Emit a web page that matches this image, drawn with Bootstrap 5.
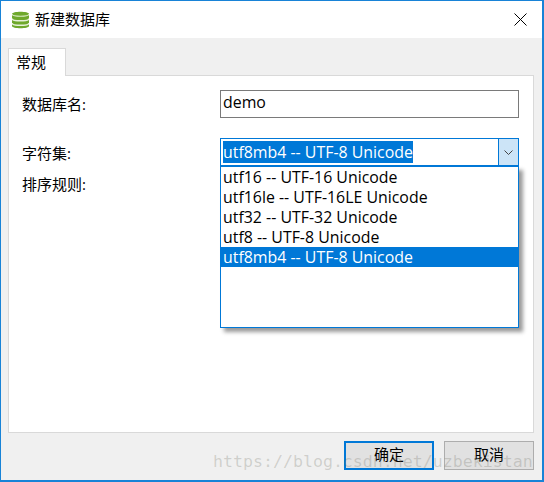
<!DOCTYPE html>
<html lang="zh-CN">
<head>
  <meta charset="UTF-8" />
  <title>新建数据库</title>
  <link href="https://cdn.jsdelivr.net/npm/bootstrap@5.3.2/dist/css/bootstrap.min.css" rel="stylesheet" />
  <style>
    html, body { height: 100%; }
    body { background: #fff; font-family: "Open Sans", "Noto Sans CJK SC", sans-serif; font-size: 15px; color: #000; overflow: hidden; }
    .dlg-window { position: relative; width: 544px; height: 482px; border: solid #1883d7; border-width: 1px 2px 2px 1px; background: #f0f0f0; }
    .dlg-title { height: 37px; background: #fff; padding-left: 11px; gap: 6px; }
    .dlg-title-text { font-size: 15px; }
    .dlg-close { position: absolute; right: 15px; top: 12px; line-height: 0; }
    .dlg-body { padding: 10px 8px 0 7px; }
    .dlg-tab { width: 58px; height: 28px; background: #fff; border: 1px solid #d9d9d9; border-bottom: 0; margin-bottom: -1px; position: relative; z-index: 1; padding: 3px 0 0 7px; line-height: 20px; }
    .dlg-panel { height: 358px; background: #fff; border: 1px solid #d9d9d9; position: relative; }
    .form-line { position: absolute; left: 13px; right: 13px; }
    .line-name { top: 14px; }
    .line-charset { top: 62px; }
    .line-charset .form-name { padding-top: 2px; }
    .line-collate { top: 97px; }
    .form-name { width: 198px; line-height: 20px; }
    .text-field { width: 299px; height: 28px; border: 1px solid #7a7a7a; padding: 0 2px 4px; line-height: 22px; font-size: 15.9px; }
    .combo-box { width: 299px; height: 28px; border: 1px solid #0078d7; background: #fff; padding: 2px; }
    .combo-value { background: #0078d7; color: #fff; padding: 0; line-height: 22px; height: 22px; font-size: 15.9px; }
    .combo-arrow { width: 20px; margin: -2px; background: #cce4f7; border-left: 1px solid #0078d7; }
    .combo-list { position: absolute; left: 211px; top: 90px; width: 299px; height: 162px; background: #fff; border: 1px solid #0078d7; box-shadow: 4px 4px 4px rgba(0,0,0,.4); z-index: 2; }
    .combo-item { height: 20px; line-height: 20px; padding-left: 2px; font-size: 15.9px; white-space: nowrap; }
    .combo-item-on { background: #0078d7; color: #fff; }
    .dlg-actions { padding-top: 8px; gap: 10px; justify-content: flex-end; }
    .dlg-btn { width: 90px; height: 29px; background: #e1e1e1; border: 1px solid #adadad; border-radius: 0; padding: 0 0 2px; font-size: 15px; color: #000; }
    .dlg-btn-main { border: 2px solid #0078d7; }
    .page-mark { position: absolute; left: 212px; top: 449px; font-family: "DejaVu Sans Mono", "Liberation Mono", monospace; font-size: 16.6px; line-height: 24px; color: rgba(120,120,110,.28); white-space: nowrap; z-index: 3; pointer-events: none; }
  </style>
</head>
<body>

<div class="dlg-window">
  <div class="dlg-title d-flex align-items-center">
    <svg width="17" height="18" viewBox="0 0 17 18">
      <path d="M0 3C0 0 17 0 17 3V15C17 18 0 18 0 15Z" fill="#6fa82c" />
      <path d="M0 3C0 6 17 6 17 3" fill="none" stroke="#dcebc8" stroke-width="1.2" />
      <path d="M0 7.5C0 10.5 17 10.5 17 7.5M0 12C0 15 17 15 17 12" fill="none" stroke="#e6f0d8" stroke-width="1.5" />
    </svg>
    <span class="dlg-title-text">新建数据库</span>
  </div>
  <div class="dlg-close">
    <svg width="13" height="13" viewBox="0 0 13 13"><path d="M.5.5l12 12M12.5.5l-12 12" stroke="#000" stroke-width="1" fill="none" /></svg>
  </div>

  <div class="dlg-body">
    <div class="dlg-tab">常规</div>
    <div class="dlg-panel">
      <div class="form-line line-name d-flex align-items-center">
        <div class="form-name">数据库名:</div>
        <div class="text-field">demo</div>
      </div>
      <div class="form-line line-charset d-flex align-items-center">
        <div class="form-name">字符集:</div>
        <div class="combo-box d-flex justify-content-between">
          <span class="combo-value">utf8mb4 -- UTF-8 Unicode</span>
          <span class="combo-arrow d-flex align-items-center justify-content-center">
            <svg width="9" height="5" viewBox="0 0 9 5"><path d="M.5.5l4 4 4-4" stroke="#444" fill="none" /></svg>
          </span>
        </div>
      </div>
      <div class="form-line line-collate">排序规则:</div>
      <div class="combo-list">
        <div class="combo-item">utf16 -- UTF-16 Unicode</div>
        <div class="combo-item">utf16le -- UTF-16LE Unicode</div>
        <div class="combo-item">utf32 -- UTF-32 Unicode</div>
        <div class="combo-item">utf8 -- UTF-8 Unicode</div>
        <div class="combo-item combo-item-on">utf8mb4 -- UTF-8 Unicode</div>
      </div>
    </div>
    <div class="dlg-actions d-flex">
      <button class="btn dlg-btn dlg-btn-main" type="button">确定</button>
      <button class="btn dlg-btn" type="button">取消</button>
    </div>
  </div>
  <div class="page-mark">https://blog.csdn.net/uzbekistan</div>
</div>

<script src="https://cdn.jsdelivr.net/npm/bootstrap@5.3.2/dist/js/bootstrap.bundle.min.js"></script>
</body>
</html>
